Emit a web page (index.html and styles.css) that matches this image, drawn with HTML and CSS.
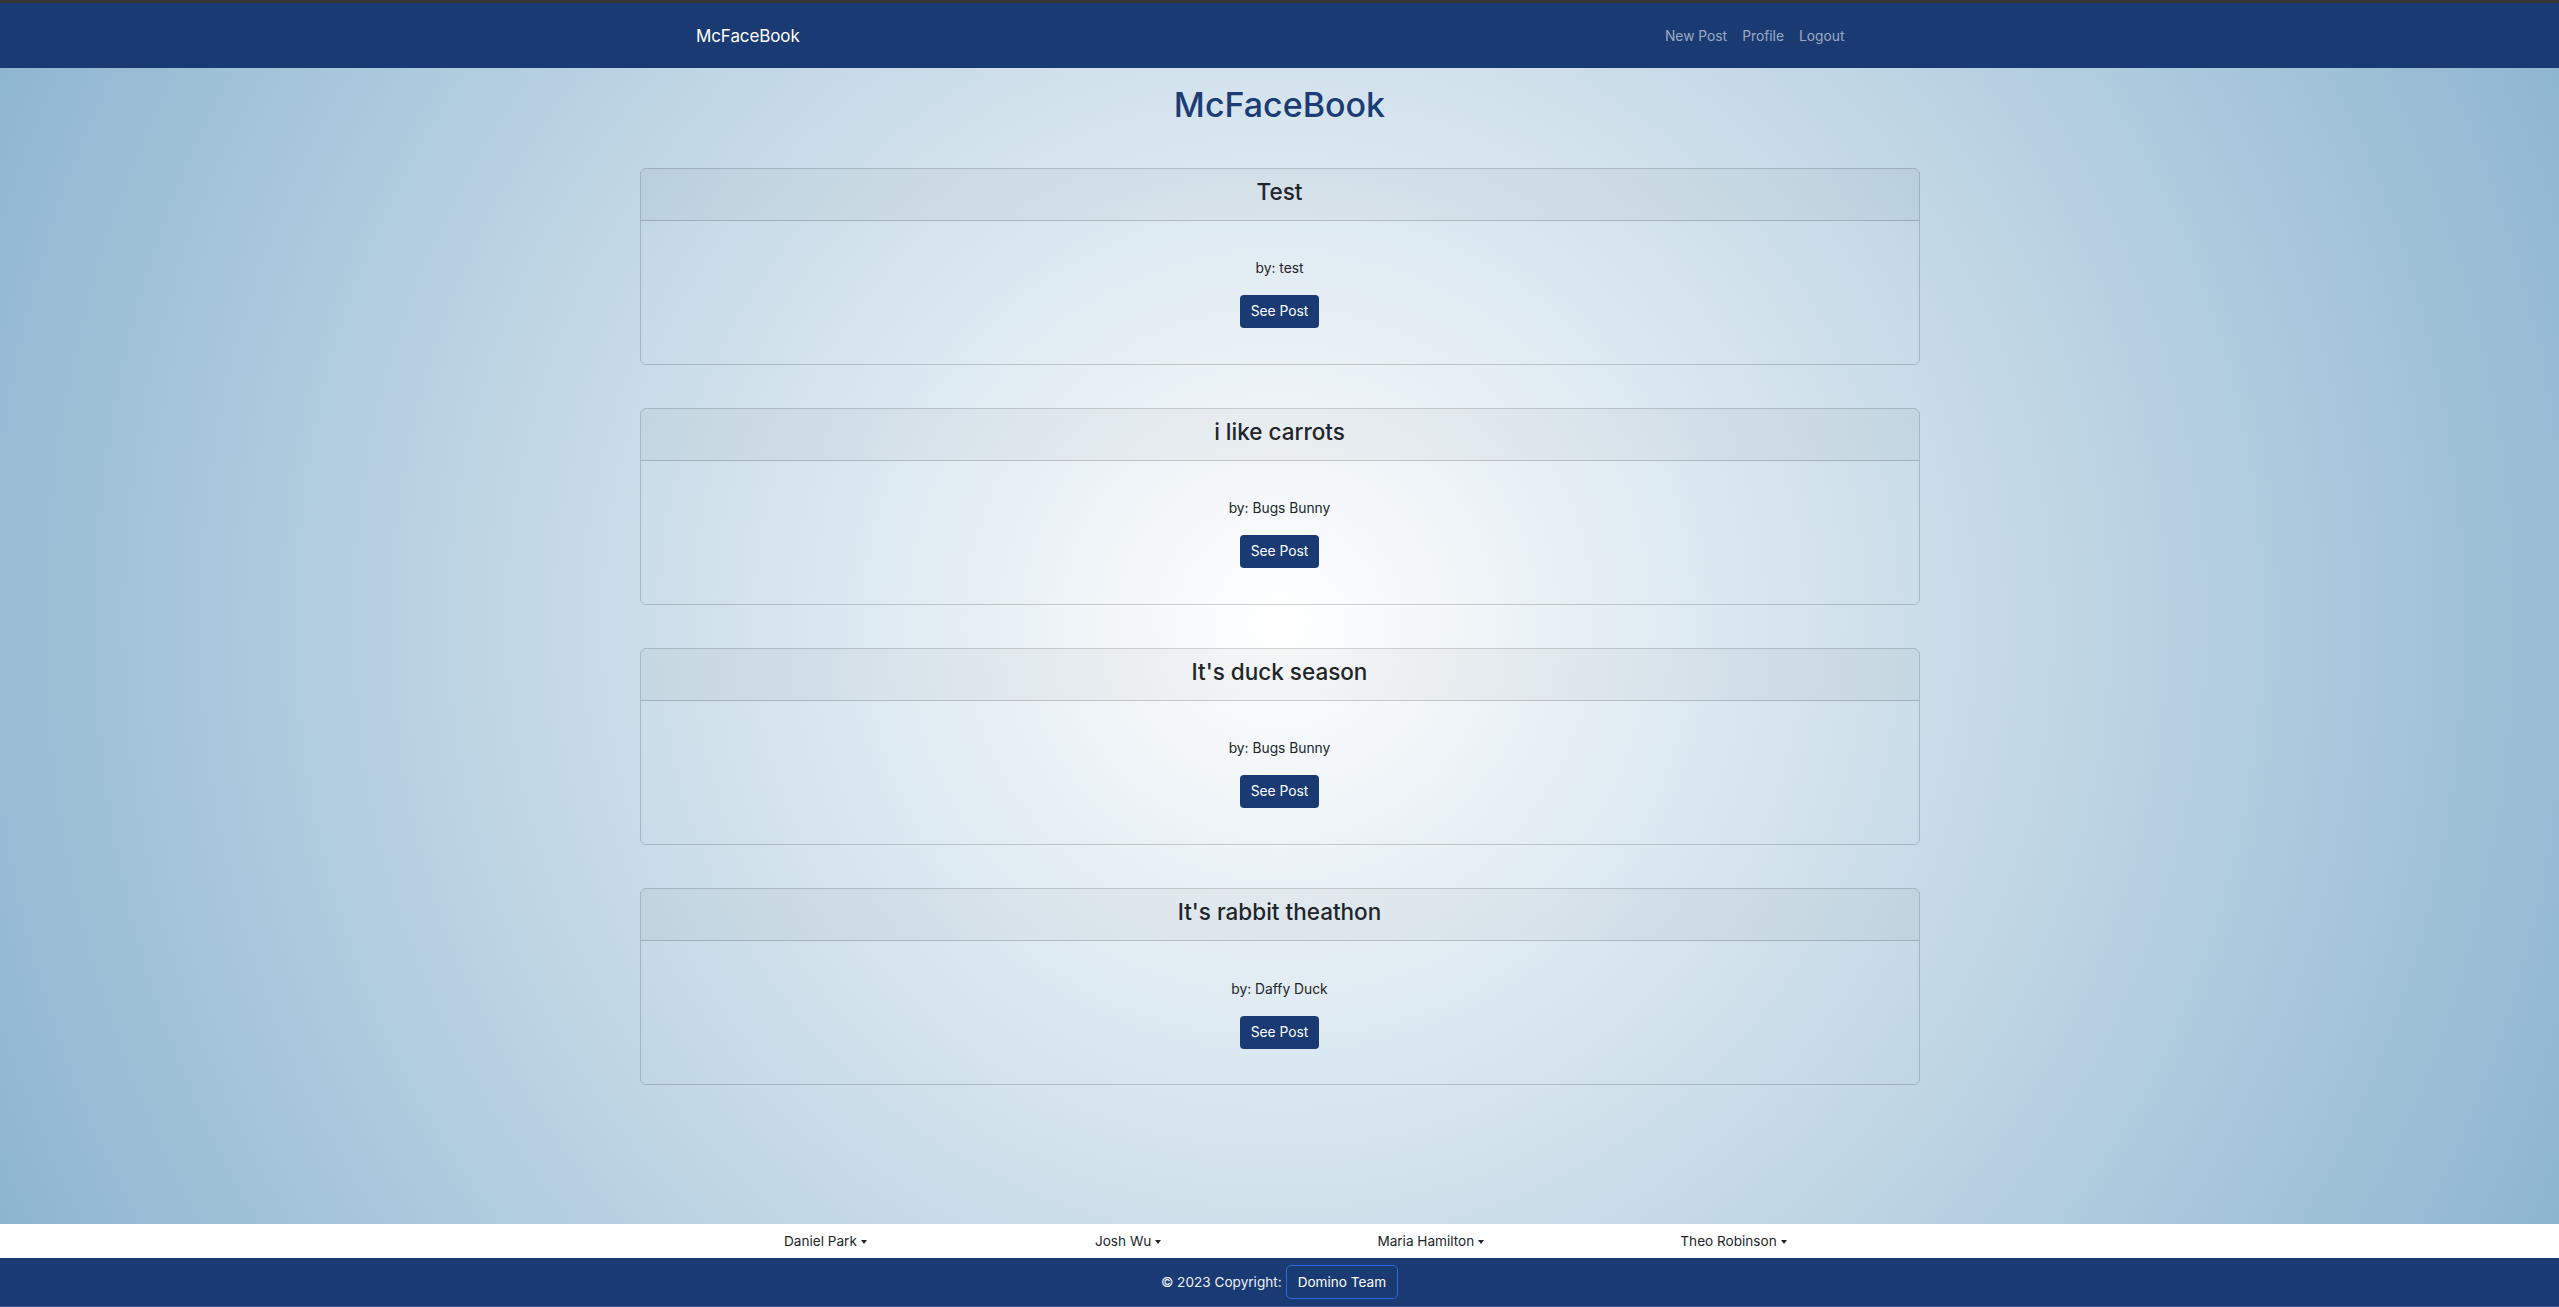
FILE: index.html
```html
<!DOCTYPE html>
<html lang="en">
<head>
<meta charset="utf-8">
<title>McFaceBook</title>
<link rel="stylesheet" href="styles.css">
</head>
<body>
<nav class="navbar">
  <a class="brand" href="#">McFaceBook</a>
  <ul class="nav-links">
    <li><a href="#">New Post</a></li>
    <li><a href="#">Profile</a></li>
    <li><a href="#">Logout</a></li>
  </ul>
</nav>
<main class="main">
  <h1 class="page-title">McFaceBook</h1>
  <div class="posts">
    <div class="card">
      <div class="card-header"><h3>Test</h3></div>
      <div class="card-body">
        <p>by: test</p>
        <a class="btn" href="#">See Post</a>
      </div>
    </div>
    <div class="card">
      <div class="card-header"><h3>i like carrots</h3></div>
      <div class="card-body">
        <p>by: Bugs Bunny</p>
        <a class="btn" href="#">See Post</a>
      </div>
    </div>
    <div class="card">
      <div class="card-header"><h3>It's duck season</h3></div>
      <div class="card-body">
        <p>by: Bugs Bunny</p>
        <a class="btn" href="#">See Post</a>
      </div>
    </div>
    <div class="card">
      <div class="card-header"><h3>It's rabbit theathon</h3></div>
      <div class="card-body">
        <p>by: Daffy Duck</p>
        <a class="btn" href="#">See Post</a>
      </div>
    </div>
  </div>
</main>
<footer class="footer">
  <div class="team">
    <span class="member">Daniel Park</span>
    <span class="member">Josh Wu</span>
    <span class="member">Maria Hamilton</span>
    <span class="member">Theo Robinson</span>
  </div>
  <div class="copyright">
    <span>© 2023 Copyright:</span>
    <a class="team-btn" href="#">Domino Team</a>
  </div>
</footer>
</body>
</html>
```
FILE: styles.css
```css
* { box-sizing: border-box; }
html, body { margin: 0; padding: 0; }
body {
  height: 1307px;
  display: flex;
  flex-direction: column;
  font-family: Inter, "Noto Sans", "Liberation Sans", sans-serif;
  color: #212529;
}
a { text-decoration: none; }

.navbar {
  flex: 0 0 68px;
  background: #193a73;
  border-top: 3px solid #363636;
  display: flex;
  align-items: center;
  padding: 0 707px 0 696px;
}
.brand {
  color: #fff;
  font-size: 17px;
  letter-spacing: -0.1px;
}
.nav-links {
  list-style: none;
  margin: 0 0 0 auto;
  padding: 0;
  display: flex;
}
.nav-links a {
  display: block;
  padding: 0 7.5px;
  color: rgba(255, 255, 255, 0.58);
  font-size: 13.8px;
}

.main {
  flex: 1;
  background: radial-gradient(circle farthest-corner at 50% 48%, #ffffff 0%, #8db5d0 100%);
  padding-top: 16.5px;
}
.page-title {
  margin: 0 0 42.5px;
  text-align: center;
  font-size: 34px;
  line-height: 1.2;
  font-weight: 500;
  color: #1b3c74;
}
.posts {
  width: 1280px;
  margin: 0 auto;
  display: flex;
  flex-direction: column;
  gap: 43.3px;
}
.card {
  border: 1px solid rgba(0, 0, 0, 0.17);
  border-radius: 6px;
  text-align: center;
  overflow: hidden;
}
.card-header {
  background: rgba(0, 0, 0, 0.03);
  border-bottom: 1px solid rgba(0, 0, 0, 0.17);
  padding: 9px 16px 15px;
}
.card-header h3 {
  margin: 0;
  font-size: 22.5px;
  line-height: 1.2;
  font-weight: 500;
}
.card-body {
  padding: 37.5px 16px 35.3px;
}
.card-body p {
  margin: 0 0 16px;
  font-size: 13.8px;
  line-height: 21px;
}
.btn {
  display: inline-block;
  background: #193a73;
  color: #fff;
  font-size: 13.8px;
  line-height: 21px;
  padding: 6px 11px;
  border-radius: 4px;
}

.footer { flex: 0 0 83px; display: flex; flex-direction: column; }
.team {
  height: 34px;
  background: #fff;
  display: grid;
  grid-template-columns: repeat(4, 302.7px);
  justify-content: center;
  justify-items: center;
  align-items: center;
  font-size: 13.6px;
}
.member::after {
  content: "";
  display: inline-block;
  margin-left: 4px;
  vertical-align: 2px;
  border-top: 4.5px solid #212529;
  border-left: 3.5px solid transparent;
  border-right: 3.5px solid transparent;
}
.copyright {
  flex: 1;
  background: #193a73;
  color: #eef1f6;
  display: flex;
  justify-content: center;
  align-items: center;
  gap: 4px;
  font-size: 13.6px;
  border-bottom: 1px solid #3d5b8c;
}
.team-btn {
  color: #fff;
  border: 1px solid #2f6ae0;
  border-radius: 5px;
  padding: 6px 11px;
  line-height: 20px;
}
```
